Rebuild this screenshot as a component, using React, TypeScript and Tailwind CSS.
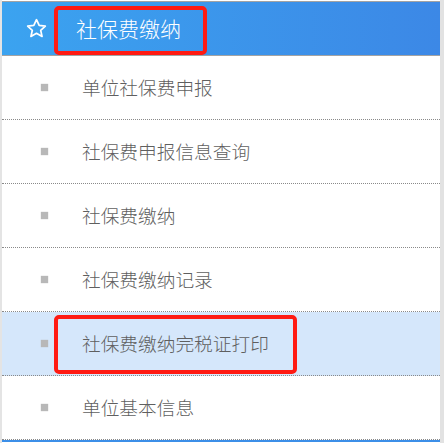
const items = [
  "单位社保费申报",
  "社保费申报信息查询",
  "社保费缴纳",
  "社保费缴纳记录",
  "社保费缴纳完税证打印",
  "单位基本信息",
];

const fontStack = { fontFamily: '"Noto Sans CJK SC", "Microsoft YaHei", sans-serif' };

export default function App() {
  return (
    <div className="flex h-[443px] w-[444px] overflow-hidden bg-white" style={fontStack}>
      <div className="flex w-[440px] flex-col border-l-2 border-[#e4e4e4]">
        <div className="h-px bg-white" />
        <div className="relative flex h-[55px] items-center border-y border-[#a3a3a3] bg-gradient-to-r from-[#3ba3f0] to-[#3c88e6]">
          <svg
            className="ml-[23px] h-[23px] w-[23px]"
            fill="none"
            stroke="white"
            strokeLinejoin="round"
            strokeWidth="1.8"
            viewBox="0 0 24 24"
          >
            <path d="M12 2.8l2.8 6 6.4.7-4.8 4.4 1.4 6.4L12 17l-5.8 3.3 1.4-6.4-4.8-4.4 6.4-.7z" />
          </svg>
          <span className="ml-[28px] text-[21px] font-light leading-none text-white">社保费缴纳</span>
          <div className="pointer-events-none absolute left-[52px] top-[4px] h-[49px] w-[153px] rounded-[5px] border-[4px] border-[#ff1a12]" />
        </div>
        {items.map((label, index) => {
          const active = index === 4;
          return (
            <div
              key={label}
              className={[
                "relative flex h-[64px] shrink-0 items-center border-b border-dotted border-[#8a8a8a]",
                active ? "bg-[#d5e7fb]" : "bg-white",
              ].join(" ")}
            >
              <span className="ml-[39px] h-[7px] w-[7px] bg-[#b8b8b8] shadow-[0_0_1px_#b8b8b8]" />
              <span className="ml-[34px] text-[18.7px] font-light leading-none text-[#5f5f5f]">{label}</span>
              {active ? (
                <div className="pointer-events-none absolute left-[52px] top-[3px] h-[59px] w-[243px] rounded-[5px] border-[4px] border-[#ff1a12]" />
              ) : null}
            </div>
          );
        })}
        <div className="h-[2px] bg-[#3c8fe8]" />
      </div>
      <div className="w-[4px] bg-[#e2e2e2]" />
    </div>
  );
}
